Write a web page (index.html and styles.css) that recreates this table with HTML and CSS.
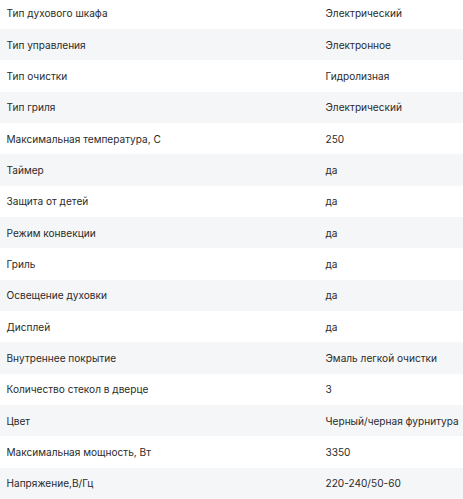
FILE: index.html
```html
<!DOCTYPE html>
<html lang="ru">
<head>
<meta charset="utf-8">
<link rel="stylesheet" href="styles.css">
</head>
<body>
<div class="specs">
  <div class="row"><div class="name">Тип духового шкафа</div><div class="value">Электрический</div></div>
  <div class="row"><div class="name">Тип управления</div><div class="value">Электронное</div></div>
  <div class="row"><div class="name">Тип очистки</div><div class="value">Гидролизная</div></div>
  <div class="row"><div class="name">Тип гриля</div><div class="value">Электрический</div></div>
  <div class="row"><div class="name">Максимальная температура, С</div><div class="value">250</div></div>
  <div class="row"><div class="name">Таймер</div><div class="value">да</div></div>
  <div class="row"><div class="name">Защита от детей</div><div class="value">да</div></div>
  <div class="row"><div class="name">Режим конвекции</div><div class="value">да</div></div>
  <div class="row"><div class="name">Гриль</div><div class="value">да</div></div>
  <div class="row"><div class="name">Освещение духовки</div><div class="value">да</div></div>
  <div class="row"><div class="name">Дисплей</div><div class="value">да</div></div>
  <div class="row"><div class="name">Внутреннее покрытие</div><div class="value">Эмаль легкой очистки</div></div>
  <div class="row"><div class="name">Количество стекол в дверце</div><div class="value">3</div></div>
  <div class="row"><div class="name">Цвет</div><div class="value">Черный/черная фурнитура</div></div>
  <div class="row"><div class="name">Максимальная мощность, Вт</div><div class="value">3350</div></div>
  <div class="row"><div class="name">Напряжение,В/Гц</div><div class="value">220-240/50-60</div></div>
</div>
</body>
</html>
```
FILE: styles.css
```css
html, body {
  margin: 0;
  padding: 0;
  background: #ffffff;
}
body {
  font-family: Inter, "Noto Sans", sans-serif;
  font-size: 10.1px;
  color: #2b2b2b;
  overflow: hidden;
}
.specs {
  margin-top: -2.33px;
}
.row {
  display: grid;
  grid-template-columns: 319px 1fr;
  align-items: center;
  height: 31.33px;
  padding-left: 6.5px;
  white-space: nowrap;
}
.row:nth-child(even) {
  background: #f5f6f8;
}
```
